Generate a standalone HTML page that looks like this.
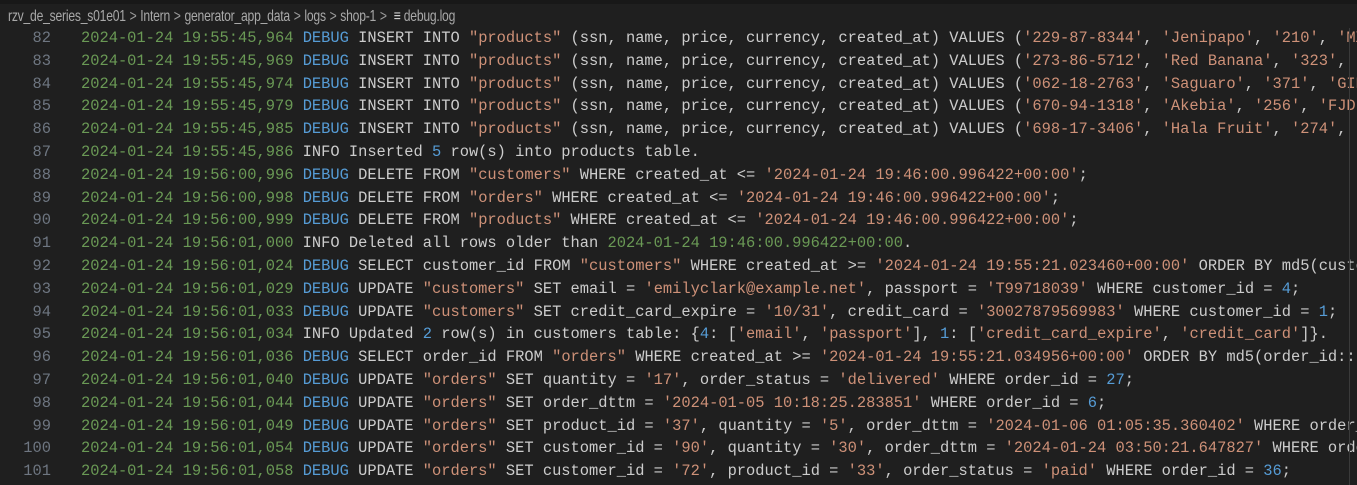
<!DOCTYPE html>
<html><head><meta charset="utf-8"><style>
html,body{margin:0;padding:0;background:#1f1f1f;width:1357px;height:485px;overflow:hidden}
.top{position:absolute;left:0;top:0;width:1357px;height:4px;background:#181818}
.bc{position:absolute;left:8px;top:4px;height:26px;line-height:26px;font-family:"Liberation Sans",sans-serif;font-size:16px;color:#a9a9a9;white-space:nowrap;letter-spacing:-0.3px;transform:scaleX(0.76);transform-origin:0 0}
.bc .sep{color:#9a9a9a;margin:0 5px}
.code{position:absolute;left:0;top:27px;font-family:"Liberation Mono",monospace;font-size:15.4px;color:#cccccc}
.l{height:22.8px;line-height:22.8px;position:relative;white-space:pre;width:1357px}
.ln{position:absolute;left:0;width:51px;text-align:right;color:#6e7681}
.c{position:absolute;left:81px}
.t{color:#6a9955}.d{color:#569cd6}.s{color:#ce9178}.n{color:#569cd6}
.vl{position:absolute;left:1349px;top:28px;width:1px;height:457px;background:#3a3a3a}
</style></head><body>
<div class="top"></div>
<div class="bc">rzv_de_series_s01e01<span class="sep">&gt;</span>Intern<span class="sep">&gt;</span>generator_app_data<span class="sep">&gt;</span>logs<span class="sep">&gt;</span>shop-1<span class="sep">&gt;</span> <span style="color:#cccccc;font-weight:bold">&#8801;</span> debug.log</div>
<div class="code"><div class="l"><span class="ln">82</span><span class="c"><span class="t">2024-01-24 19:55:45,964</span> <span class="d">DEBUG</span> INSERT INTO <span class="s">"products"</span> (ssn, name, price, currency, created_at) VALUES (<span class="s">'229-87-8344'</span>, <span class="s">'Jenipapo'</span>, <span class="s">'210'</span>, <span class="s">'MXN'</span></span></div><div class="l"><span class="ln">83</span><span class="c"><span class="t">2024-01-24 19:55:45,969</span> <span class="d">DEBUG</span> INSERT INTO <span class="s">"products"</span> (ssn, name, price, currency, created_at) VALUES (<span class="s">'273-86-5712'</span>, <span class="s">'Red Banana'</span>, <span class="s">'323'</span>,</span></div><div class="l"><span class="ln">84</span><span class="c"><span class="t">2024-01-24 19:55:45,974</span> <span class="d">DEBUG</span> INSERT INTO <span class="s">"products"</span> (ssn, name, price, currency, created_at) VALUES (<span class="s">'062-18-2763'</span>, <span class="s">'Saguaro'</span>, <span class="s">'371'</span>, <span class="s">'GIP'</span></span></div><div class="l"><span class="ln">85</span><span class="c"><span class="t">2024-01-24 19:55:45,979</span> <span class="d">DEBUG</span> INSERT INTO <span class="s">"products"</span> (ssn, name, price, currency, created_at) VALUES (<span class="s">'670-94-1318'</span>, <span class="s">'Akebia'</span>, <span class="s">'256'</span>, <span class="s">'FJD'</span></span></div><div class="l"><span class="ln">86</span><span class="c"><span class="t">2024-01-24 19:55:45,985</span> <span class="d">DEBUG</span> INSERT INTO <span class="s">"products"</span> (ssn, name, price, currency, created_at) VALUES (<span class="s">'698-17-3406'</span>, <span class="s">'Hala Fruit'</span>, <span class="s">'274'</span>,</span></div><div class="l"><span class="ln">87</span><span class="c"><span class="t">2024-01-24 19:55:45,986</span> INFO Inserted <span class="n">5</span> row(s) into products table.</span></div><div class="l"><span class="ln">88</span><span class="c"><span class="t">2024-01-24 19:56:00,996</span> <span class="d">DEBUG</span> DELETE FROM <span class="s">"customers"</span> WHERE created_at &lt;= <span class="s">'2024-01-24 19:46:00.996422+00:00'</span>;</span></div><div class="l"><span class="ln">89</span><span class="c"><span class="t">2024-01-24 19:56:00,998</span> <span class="d">DEBUG</span> DELETE FROM <span class="s">"orders"</span> WHERE created_at &lt;= <span class="s">'2024-01-24 19:46:00.996422+00:00'</span>;</span></div><div class="l"><span class="ln">90</span><span class="c"><span class="t">2024-01-24 19:56:00,999</span> <span class="d">DEBUG</span> DELETE FROM <span class="s">"products"</span> WHERE created_at &lt;= <span class="s">'2024-01-24 19:46:00.996422+00:00'</span>;</span></div><div class="l"><span class="ln">91</span><span class="c"><span class="t">2024-01-24 19:56:01,000</span> INFO Deleted all rows older than <span class="t">2024-01-24 19:46:00.996422+00:00</span>.</span></div><div class="l"><span class="ln">92</span><span class="c"><span class="t">2024-01-24 19:56:01,024</span> <span class="d">DEBUG</span> SELECT customer_id FROM <span class="s">"customers"</span> WHERE created_at &gt;= <span class="s">'2024-01-24 19:55:21.023460+00:00'</span> ORDER BY md5(customer</span></div><div class="l"><span class="ln">93</span><span class="c"><span class="t">2024-01-24 19:56:01,029</span> <span class="d">DEBUG</span> UPDATE <span class="s">"customers"</span> SET email = <span class="s">'emilyclark@example.net'</span>, passport = <span class="s">'T99718039'</span> WHERE customer_id = <span class="n">4</span>;</span></div><div class="l"><span class="ln">94</span><span class="c"><span class="t">2024-01-24 19:56:01,033</span> <span class="d">DEBUG</span> UPDATE <span class="s">"customers"</span> SET credit_card_expire = <span class="s">'10/31'</span>, credit_card = <span class="s">'30027879569983'</span> WHERE customer_id = <span class="n">1</span>;</span></div><div class="l"><span class="ln">95</span><span class="c"><span class="t">2024-01-24 19:56:01,034</span> INFO Updated <span class="n">2</span> row(s) in customers table: {<span class="n">4</span>: [<span class="s">'email'</span>, <span class="s">'passport'</span>], <span class="n">1</span>: [<span class="s">'credit_card_expire'</span>, <span class="s">'credit_card'</span>]}.</span></div><div class="l"><span class="ln">96</span><span class="c"><span class="t">2024-01-24 19:56:01,036</span> <span class="d">DEBUG</span> SELECT order_id FROM <span class="s">"orders"</span> WHERE created_at &gt;= <span class="s">'2024-01-24 19:55:21.034956+00:00'</span> ORDER BY md5(order_id::text</span></div><div class="l"><span class="ln">97</span><span class="c"><span class="t">2024-01-24 19:56:01,040</span> <span class="d">DEBUG</span> UPDATE <span class="s">"orders"</span> SET quantity = <span class="s">'17'</span>, order_status = <span class="s">'delivered'</span> WHERE order_id = <span class="n">27</span>;</span></div><div class="l"><span class="ln">98</span><span class="c"><span class="t">2024-01-24 19:56:01,044</span> <span class="d">DEBUG</span> UPDATE <span class="s">"orders"</span> SET order_dttm = <span class="s">'2024-01-05 10:18:25.283851'</span> WHERE order_id = <span class="n">6</span>;</span></div><div class="l"><span class="ln">99</span><span class="c"><span class="t">2024-01-24 19:56:01,049</span> <span class="d">DEBUG</span> UPDATE <span class="s">"orders"</span> SET product_id = <span class="s">'37'</span>, quantity = <span class="s">'5'</span>, order_dttm = <span class="s">'2024-01-06 01:05:35.360402'</span> WHERE order_id</span></div><div class="l"><span class="ln">100</span><span class="c"><span class="t">2024-01-24 19:56:01,054</span> <span class="d">DEBUG</span> UPDATE <span class="s">"orders"</span> SET customer_id = <span class="s">'90'</span>, quantity = <span class="s">'30'</span>, order_dttm = <span class="s">'2024-01-24 03:50:21.647827'</span> WHERE order_id</span></div><div class="l"><span class="ln">101</span><span class="c"><span class="t">2024-01-24 19:56:01,058</span> <span class="d">DEBUG</span> UPDATE <span class="s">"orders"</span> SET customer_id = <span class="s">'72'</span>, product_id = <span class="s">'33'</span>, order_status = <span class="s">'paid'</span> WHERE order_id = <span class="n">36</span>;</span></div></div>
<div class="vl"></div>
</body></html>
